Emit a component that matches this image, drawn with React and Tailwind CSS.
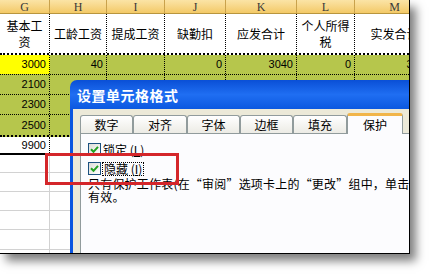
import React from 'react';
import clsx from 'clsx';

const cjk = "font-['Noto_Sans_CJK_SC','Liberation_Sans',sans-serif]";
const num = "font-['Liberation_Sans',sans-serif]";

// column widths G..M
const widths = ['w-[50px]', 'w-[57px]', 'w-[58px]', 'w-[61px]', 'w-[71px]', 'w-[58px]', 'w-[80px]'];
const letters = ['G', 'H', 'I', 'J', 'K', 'L', 'M'];

const titles = [
  <>基本工<br />资</>,
  '工龄工资',
  '提成工资',
  '缺勤扣',
  '应发合计',
  <>个人所得<br />税</>,
  '实发合计',
];

const dataRows = [
  { vals: ['3000', '40', '', '0', '3040', '0', '3040'], h: 'h-[20px] border-b', first: true },
  { vals: ['2100', '', '', '', '', '', ''], h: 'h-[20px] border-b' },
  { vals: ['2300', '', '', '', '', '', ''], h: 'h-[20px] border-b' },
  { vals: ['2500', '', '', '', '', '', ''], h: 'h-[22px] border-b-2' },
];

const emptyRows = ['h-[18px]', 'h-[19px]', 'h-[19px]', 'h-[19px]', 'h-[20px]', 'h-[20px]'];

const tabs = [
  { name: '数字', w: 'w-[53px]' },
  { name: '对齐', w: 'w-[54px]' },
  { name: '字体', w: 'w-[53px]' },
  { name: '边框', w: 'w-[53px]' },
  { name: '填充', w: 'w-[54px]' },
];

const Check = () => (
  <div className="w-[13px] h-[13px] shrink-0 border border-[#1c5180] bg-gradient-to-br from-[#dcdcd7] to-white flex items-center justify-center">
    <svg width="9" height="9" viewBox="0 0 9 9">
      <path d="M1 4.2 L3.5 6.8 L8 1.8" stroke="#21a121" strokeWidth="2" fill="none" />
    </svg>
  </div>
);

const Sheet = () => (
  <div className="flex flex-col">
    {/* column letters */}
    <div className="flex h-[14px] bg-gradient-to-b from-[#fbe4a6] to-[#f3c966] border-b border-[#b8953e]">
      {letters.map((l, i) => (
        <div
          key={l}
          className={clsx(widths[i], "shrink-0 border-r border-[#c9a24c] flex items-center justify-center text-[12px] leading-none text-[#3a3a3a] font-['Liberation_Serif',serif]")}
        >
          {l}
        </div>
      ))}
    </div>

    {/* titles */}
    <div className="flex h-[41px] bg-white border-b-2 border-dotted border-black">
      {titles.map((t, i) => (
        <div
          key={i}
          className={clsx(widths[i], cjk, 'shrink-0 border-r border-dotted border-black flex items-center justify-center text-center whitespace-nowrap text-[12px] leading-[16px] text-black')}
        >
          <span>{t}</span>
        </div>
      ))}
    </div>

    {/* data */}
    {dataRows.map((r, ri) => (
      <div key={ri} className={clsx('flex bg-[#b6c64c] border-dotted border-black', r.h)}>
        {r.vals.map((v, i) => (
          <div
            key={i}
            className={clsx(
              widths[i],
              num,
              'shrink-0 border-r border-dotted border-black flex items-center justify-end pr-[3px] text-[11px] text-black',
              r.first && i === 0 && 'bg-[#ffff00]'
            )}
          >
            {v}
          </div>
        ))}
      </div>
    ))}

    {/* total */}
    <div className="flex h-[18px] bg-white border-b-2 border-black">
      {widths.map((w, i) => (
        <div
          key={i}
          className={clsx(w, num, 'shrink-0 border-r border-dotted border-black flex items-center justify-end pr-[3px] text-[11px] text-black')}
        >
          {i === 0 ? '9900' : ''}
        </div>
      ))}
    </div>

    {/* empty grid */}
    {emptyRows.map((h, ri) => (
      <div key={ri} className={clsx('flex bg-white border-b border-[#d2d2d2]', h)}>
        {widths.map((w, i) => (
          <div key={i} className={clsx(w, 'shrink-0 border-r border-[#d2d2d2]')} />
        ))}
      </div>
    ))}
  </div>
);

const Dialog = () => (
  <div className={clsx(cjk, 'absolute left-[70px] top-[80px] w-[350px] h-[200px] rounded-tl-[7px] overflow-hidden flex flex-col')}>
    <div className="h-[29px] shrink-0 bg-gradient-to-b from-[#0a4fd6] via-[#1f6ef2] to-[#0b58e0] flex items-center pl-[7px]">
      <span className="text-white font-bold text-[14px] leading-none tracking-[0.5px]">设置单元格格式</span>
    </div>
    <div className="flex-1 flex flex-col bg-[#ece9d8] border-l-[3px] border-[#0b56e0] pt-[4px] pl-[7px]">
      <div className="flex items-end h-[20px] relative z-10">
        {tabs.map((t) => (
          <div
            key={t.name}
            className={clsx(t.w, 'h-[18px] shrink-0 border border-b-0 border-[#919b9c] rounded-t-[3px] bg-gradient-to-b from-white to-[#ecebe5] flex items-center justify-center text-[12px] leading-none text-black')}
          >
            {t.name}
          </div>
        ))}
        <div className="w-[56px] h-[21px] -mb-px shrink-0 border border-b-0 border-[#919b9c] border-t-[3px] border-t-[#f1b54a] rounded-t-[3px] bg-[#fcfcfe] flex items-center justify-center text-[12px] leading-none text-black">
          保护
        </div>
      </div>
      <div className="flex-1 border border-[#919b9c] bg-[#fcfcfe] pl-[7px] pt-[9px] flex flex-col">
        <div className="flex items-center h-[13px]">
          <Check />
          <span className="ml-[2px] text-[12px] leading-none text-black whitespace-pre">
            锁定 (<span className="underline">L</span>)
          </span>
        </div>
        <div className="flex items-center h-[13px] mt-[6px]">
          <Check />
          <span className="ml-[2px] px-[1px] text-[12px] leading-none text-black whitespace-pre outline-1 outline-dotted outline-black">
            隐藏 (<span className="underline">I</span>)
          </span>
        </div>
        <p className="mt-[2px] text-[12px] leading-[13px] tracking-[0.2px] text-black whitespace-nowrap">
          只有保护工作表(在“审阅”选项卡上的“更改”组中，单击
          <br />
          有效。
        </p>
      </div>
    </div>
  </div>
);

export default function App() {
  return (
    <div className="relative w-[431px] h-[276px] bg-white overflow-hidden">
      <div className="relative w-[410px] h-[254px] bg-white border-r border-b border-black overflow-hidden shadow-[6px_7px_9px_rgba(0,0,0,0.5)]">
        <Sheet />
        <Dialog />
        <div className="absolute left-[45px] top-[153px] w-[134px] h-[32px] border-[3px] border-[#d4262a]" />
      </div>
    </div>
  );
}
